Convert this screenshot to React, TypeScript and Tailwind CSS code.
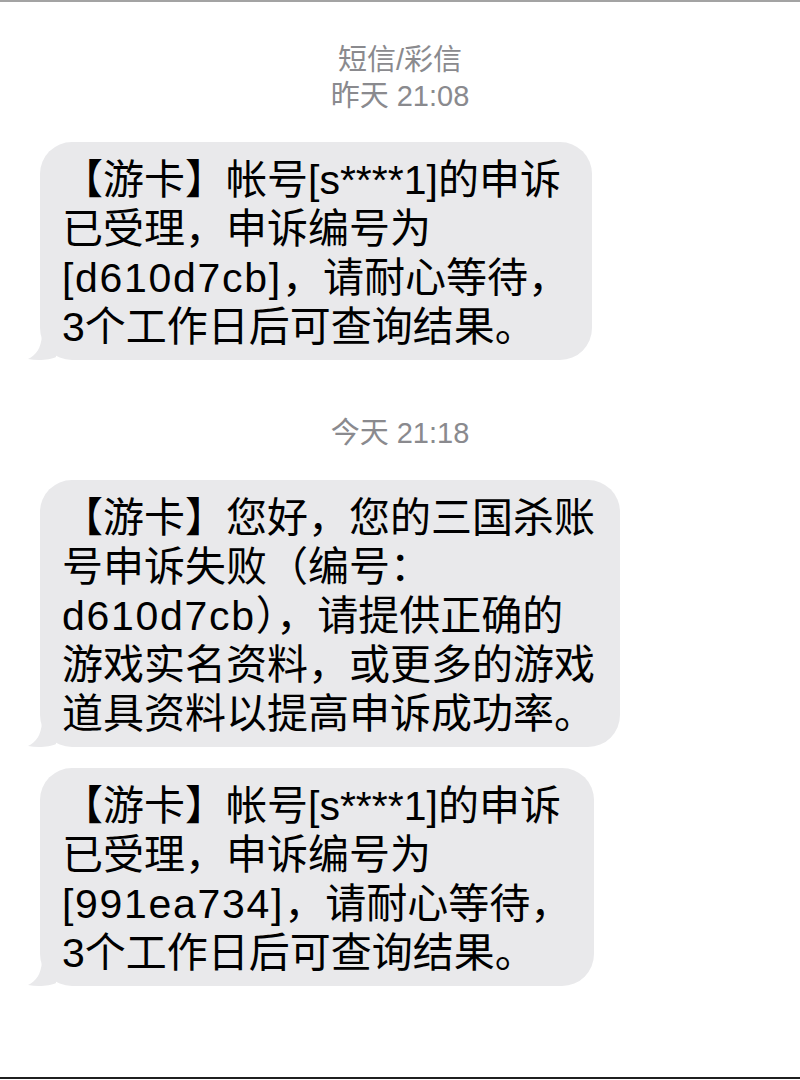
import type { ReactNode } from 'react'

const Code = ({ children }: { children: ReactNode }) => <span className="tracking-[1.7px]">{children}</span>

const MESSAGES: { width: string; lines: ReactNode[] }[] = [
  {
    width: 'w-[552px]',
    lines: [
      <>【游卡】帐号[s****1]的申诉</>,
      '已受理，申诉编号为',
      <><Code>[d610d7cb]</Code>，请耐心等待，</>,
      '3个工作日后可查询结果。',
    ],
  },
  {
    width: 'w-[580px]',
    lines: [
      '【游卡】您好，您的三国杀账',
      '号申诉失败（编号：',
      <><Code>d610d7cb</Code>），请提供正确的</>,
      '游戏实名资料，或更多的游戏',
      '道具资料以提高申诉成功率。',
    ],
  },
  {
    width: 'w-[554px]',
    lines: [
      <>【游卡】帐号[s****1]的申诉</>,
      '已受理，申诉编号为',
      <><Code>[991ea734]</Code>，请耐心等待，</>,
      '3个工作日后可查询结果。',
    ],
  },
]

export default function App() {
  return (
    <div className="h-[1080px] flex flex-col bg-white border-t-2 border-[#a3a3a3] font-['Liberation_Sans','Noto_Sans_CJK_SC',sans-serif]">
      {/* Thread header */}
      <div className="pt-[40px] text-center text-[29px] leading-[36px] text-[#8a8a8e]">
        <p>短信/彩信</p>
        <p>昨天 21:08</p>
      </div>

      <div className="mt-[28px] pl-[40px]">
        <Bubble {...MESSAGES[0]} />
      </div>

      <p className="mt-[55px] text-center text-[29px] leading-[36px] text-[#8a8a8e]">今天 21:18</p>

      <div className="mt-[29px] pl-[40px] flex flex-col gap-[21px]">
        <Bubble {...MESSAGES[1]} />
        <Bubble {...MESSAGES[2]} />
      </div>

      <div className="mt-auto mb-[1px] h-[2px] bg-[#1f1f1f]" />
    </div>
  )
}

function Bubble({ width, lines }: { width: string; lines: ReactNode[] }) {
  return (
    <div className={`relative ${width}`}>
      {/* tail */}
      <svg className="absolute left-[-12px] bottom-[-1px]" width="30" height="26" viewBox="0 0 30 26">
        <path d="M14 0 L28 0 L28 22 C22 25 10 26 0 24 C8 20 13 14 14 0 Z" fill="#e9e9eb" />
      </svg>
      <div className="relative rounded-[32px] bg-[#e9e9eb] pl-[22px] pr-[16px] pt-[14px] pb-[8px] text-[41px] leading-[49px] text-black">
        {lines.map((line, i) => (
          <div key={i} className="whitespace-nowrap">
            {line}
          </div>
        ))}
      </div>
    </div>
  )
}
